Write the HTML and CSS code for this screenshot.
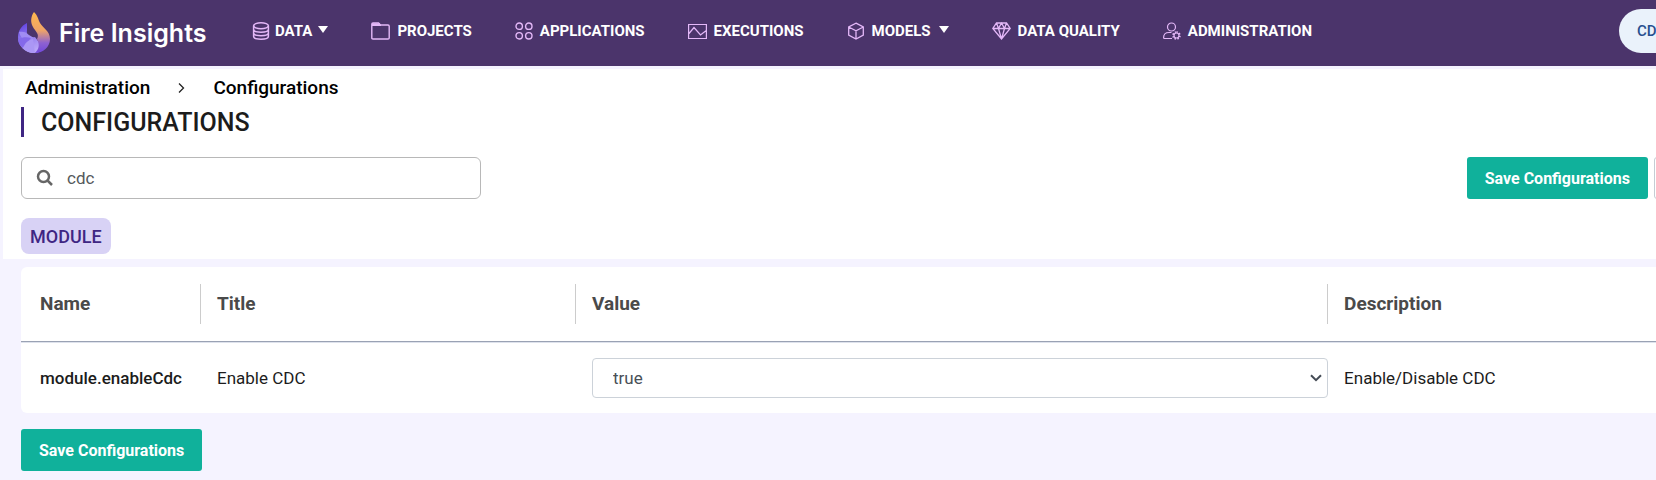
FILE: index.html
```html
<!DOCTYPE html>
<html lang="en">
<head>
<meta charset="utf-8">
<title>Fire Insights - Configurations</title>
<link rel="stylesheet" href="styles.css">
</head>
<body>
<header class="topbar">
  <a class="brand" href="#">
    <svg class="brand-mark" width="34" height="42" viewBox="0 0 34 42" aria-hidden="true">
      <defs>
        <linearGradient id="flame" x1="0" y1="0" x2="0" y2="1"><stop offset="0" stop-color="#ffb84d"/><stop offset=".45" stop-color="#eea368"/><stop offset=".75" stop-color="#8e62d0"/><stop offset="1" stop-color="#7047dc"/></linearGradient>
        <linearGradient id="swirl" x1="0" y1="0" x2=".4" y2="1"><stop offset="0" stop-color="#5838e0"/><stop offset=".5" stop-color="#8f78ee"/><stop offset="1" stop-color="#b9a6f8"/></linearGradient>
      </defs>
      <path d="M10 11C4 14 1 19 1 25c0 9 7 16 16 16 4 0 8-2 10-4L18 25c-5 1-9-2-8-7z" fill="url(#swirl)"/>
      <path d="M2 20c4-1 7 0 10 3l5 3-9 3c-3-3-5-5-6-9z" fill="#a08cf3"/>
      <path d="M1 27c5-2 9-2 13-1l-8 10c-3-2-5-5-5-9z" fill="#8469ea"/>
      <path d="M6 36c2-5 5-8 10-9l2 14c-5 0-9-1-12-5z" fill="#ab97f5"/>
      <path d="M17 0c4 4 4 7 6 11 3 5 10 8 10 16 0 8-7 14-15 14 4-4 5-8 2-14 3-5-2-8-4-12-3-5-2-11 1-15z" fill="url(#flame)"/>
    </svg>
    <span>Fire Insights</span>
  </a>
  <nav class="nav">
    <a class="nav-link nav-tight" href="#">
      <svg class="icon" width="18" height="18" viewBox="0 0 18 18" stroke-width="1.5"><ellipse cx="9" cy="3.8" rx="7.4" ry="3"/><path d="M1.6 3.8v10.4c0 1.7 3.3 3 7.4 3s7.400-1.300 7.400-3V3.800M1.600 7.300c0 1.700 3.300 3 7.400 3s7.400-1.300 7.400-3M1.600 10.800c0 1.700 3.300 3 7.400 3s7.400-1.300 7.400-3"/></svg>
      <span>DATA</span>
      <svg class="caret" width="10" height="7" viewBox="0 0 10 7"><path d="M0 0h10L5 7z"/></svg>
    </a>
    <a class="nav-link" href="#">
      <svg class="icon" width="19" height="18" viewBox="0 0 19 18" stroke-width="1.4"><path d="M.8 16V2.300C.8 1.400 1.300 1 2 1h5.500l2 2H17c.8 0 1.200.4 1.200 1.200V16c0 .7-.4 1-1.200 1H2c-.8 0-1.200-.3-1.200-1z"/><path d="M1 2h8M1 3.200h9"/></svg>
      <span>PROJECTS</span>
    </a>
    <a class="nav-link" href="#">
      <svg class="icon" width="18" height="18" viewBox="0 0 18 18" stroke-width="1.4"><circle cx="4.200" cy="4.200" r="3.200"/><circle cx="13.800" cy="4.200" r="3.200"/><circle cx="4.200" cy="13.800" r="3.200"/><circle cx="13.800" cy="13.800" r="3.200"/></svg>
      <span>APPLICATIONS</span>
    </a>
    <a class="nav-link" href="#">
      <svg class="icon" width="19" height="18" viewBox="0 0 19 18" stroke-width="1.200"><path d="M.6 2.500h17.800v14H.6zM1 11.500l5-6 6.500 7.500 2.500-2 3.400-2.500"/></svg>
      <span>EXECUTIONS</span>
    </a>
    <a class="nav-link" href="#">
      <svg class="icon" width="18" height="18" viewBox="0 0 18 18" stroke-width="1.300"><path d="M9 1.200l7.300 3.600v8.400L9 17l-7.300-3.800V4.800zM1.700 5L9 8.800 16.300 5M9 8.800V17"/></svg>
      <span>MODELS</span>
      <svg class="caret" width="10" height="7" viewBox="0 0 10 7"><path d="M0 0h10L5 7z"/></svg>
    </a>
    <a class="nav-link" href="#">
      <svg class="icon" width="19" height="18" viewBox="0 0 19 18" stroke-width="1.300"><path d="M4.500 1h10L18.200 6.500 9.500 17 .8 6.500zM.8 6.500h17.400M4.500 1l2 5.500 3 10.500 3-10.500 2-5.500M6.500 6.500l3-5.500 3 5.500"/></svg>
      <span>DATA QUALITY</span>
    </a>
    <a class="nav-link" href="#">
      <svg class="icon" width="18" height="18" viewBox="0 0 18 18" stroke-width="1.200"><circle cx="8.500" cy="5" r="4"/><path d="M9 16.500H1.500C.8 16.500.6 16 .6 15.500c0-3.200 2.400-5 5.400-5h2.500"/><circle cx="13.500" cy="13.500" r="2.500"/><path stroke-width="1.600" stroke-dasharray="1.400 1.350" d="M13.500 10a3.500 3.500 0 1 1-.01 0z"/></svg>
      <span>ADMINISTRATION</span>
    </a>
  </nav>
  <button class="user-pill" type="button">CD</button>
</header>

<main>
  <section class="panel">
    <nav class="crumbs" aria-label="Breadcrumb">
      <a href="#">Administration</a>
      <svg width="7" height="10" viewBox="0 0 7 10" aria-hidden="true"><path d="M1 .5L5.500 5 1 9.500"/></svg>
      <a href="#">Configurations</a>
    </nav>
    <h1 class="title">CONFIGURATIONS</h1>
    <div class="toolbar">
      <label class="search">
        <svg width="18" height="18" viewBox="0 0 18 18" aria-hidden="true"><circle cx="7.500" cy="7.500" r="5.500"/><path d="M11.500 11.500l4.500 4.500"/></svg>
        <input type="text" value="cdc" aria-label="Search configurations">
      </label>
      <div class="actions">
        <button class="btn" type="button">Save Configurations</button>
        <button class="btn-outline" type="button" aria-label="More"></button>
      </div>
    </div>
    <button class="tag" type="button">MODULE</button>
  </section>

  <section class="content">
    <table class="grid">
      <thead>
        <tr>
          <th class="col-name"><div>Name</div></th>
          <th class="col-title"><div>Title</div></th>
          <th class="col-value"><div>Value</div></th>
          <th><div>Description</div></th>
        </tr>
      </thead>
      <tbody>
        <tr>
          <td class="key">module.enableCdc</td>
          <td>Enable CDC</td>
          <td>
            <div class="select">
              <select aria-label="Enable CDC"><option>true</option><option>false</option></select>
              <svg width="12" height="8" viewBox="0 0 12 8" aria-hidden="true"><path d="M1 1.200l5 5 5-5"/></svg>
            </div>
          </td>
          <td>Enable/Disable CDC</td>
        </tr>
      </tbody>
    </table>
    <button class="btn" type="button">Save Configurations</button>
  </section>
</main>
</body>
</html>
```
FILE: styles.css
```css
* { box-sizing: border-box; }
body {
  margin: 0;
  background: #f5f3ff;
  color: #1c1c1c;
  font-family: Roboto, sans-serif;
  font-size: 17px;
}
a { color: inherit; text-decoration: none; }
button, input, select { font: inherit; }

.topbar {
  display: flex;
  align-items: center;
  overflow: hidden;
  height: 66px;
  padding-left: 17px;
  background: #4b346b;
  color: #fff;
  white-space: nowrap;
}
.brand {
  display: flex;
  align-items: center;
  gap: 8px;
  width: 235px;
  font: 600 25px Inter, sans-serif;
}
.nav { display: flex; gap: 43px; padding-bottom: 4px; }
.nav-link {
  display: flex;
  align-items: center;
  gap: 7px;
  font-size: 15px;
  font-weight: 700;
  line-height: 20px;
}
.nav-tight { gap: 5px; }
.icon { fill: none; stroke: #e4b8f8; }
.caret { margin: 0 0 4px 1px; fill: #fff; }
.user-pill {
  flex-shrink: 0;
  width: 120px;
  height: 44px;
  margin: 0 -83px 4px auto;
  padding: 0 18px;
  border: 0;
  border-radius: 22px;
  background: #eaf2fb;
  color: #27508f;
  font-size: 15px;
  font-weight: 500;
  text-align: left;
}

.panel {
  overflow: hidden;
  margin: 3px 0 8px 3px;
  padding: 8px 0 5px 18px;
  background: #fff;
}
.crumbs {
  display: flex;
  align-items: center;
  gap: 28px;
  padding-left: 4px;
  color: #000;
  font-size: 19px;
  font-weight: 500;
  line-height: 22px;
}
.crumbs svg { fill: none; stroke: #222; stroke-width: 1.300; }
.title {
  margin: 8px 0 20px;
  padding: 2px 0 0 17px;
  border-left: 3px solid #3f2683;
  font-size: 25px;
  font-weight: 500;
  line-height: 28px;
}
.toolbar { display: flex; justify-content: space-between; }
.search {
  display: flex;
  align-items: center;
  gap: 13px;
  width: 460px;
  height: 42px;
  padding: 0 14px;
  border: 1px solid #b8b8b8;
  border-radius: 6px;
}
.search svg { fill: none; stroke: #666; stroke-width: 2.500; }
.search input { flex: 1; padding: 0; border: 0; outline: 0; background: none; color: #55595c; }
.actions { display: flex; gap: 6px; margin-right: -118px; }
.btn {
  height: 42px;
  padding: 0 18px;
  border: 0;
  border-radius: 3px;
  background: #10b19b;
  color: #fff;
  font-size: 16px;
  font-weight: 700;
  white-space: nowrap;
}
.btn-outline { width: 120px; border: 1px solid #c5ccd3; border-radius: 3px; background: #fff; }
.tag {
  display: block;
  height: 36px;
  margin-top: 19px;
  padding: 0 9px;
  border: 0;
  border-radius: 8px;
  background: #d8d2f5;
  color: #3f2683;
  font-size: 18px;
  font-weight: 500;
}

.content { padding-left: 21px; }
.grid {
  width: 100%;
  margin-bottom: 16px;
  border-spacing: 0;
  border-radius: 6px 0 0 6px;
  background: #fff;
  table-layout: fixed;
}
.col-name { width: 180px; }
.col-title { width: 375px; }
.col-value { width: 46%; }
th {
  padding: 17px 0 17px 16px;
  border-bottom: 1px solid #9aa2b4;
  color: #4a4a4a;
  font-size: 19px;
  font-weight: 700;
  text-align: left;
}
th div { border-right: 1px solid #ccc; line-height: 40px; }
th:last-child div { border: 0; }
td { padding: 15px 0 15px 16px; border-top: 1px solid #dee2ec; }
th:first-child, td:first-child { padding-left: 19px; }
.key { font-weight: 500; }
.select { display: grid; align-items: center; }
.select > * { grid-area: 1 / 1; }
.select select {
  appearance: none;
  height: 40px;
  padding: 0 20px;
  border: 1px solid #ccd2d9;
  border-radius: 4px;
  background: #fff;
  color: #495057;
}
.select svg {
  justify-self: end;
  margin-right: 6px;
  fill: none;
  stroke: #444b55;
  stroke-width: 2;
  pointer-events: none;
}
```
